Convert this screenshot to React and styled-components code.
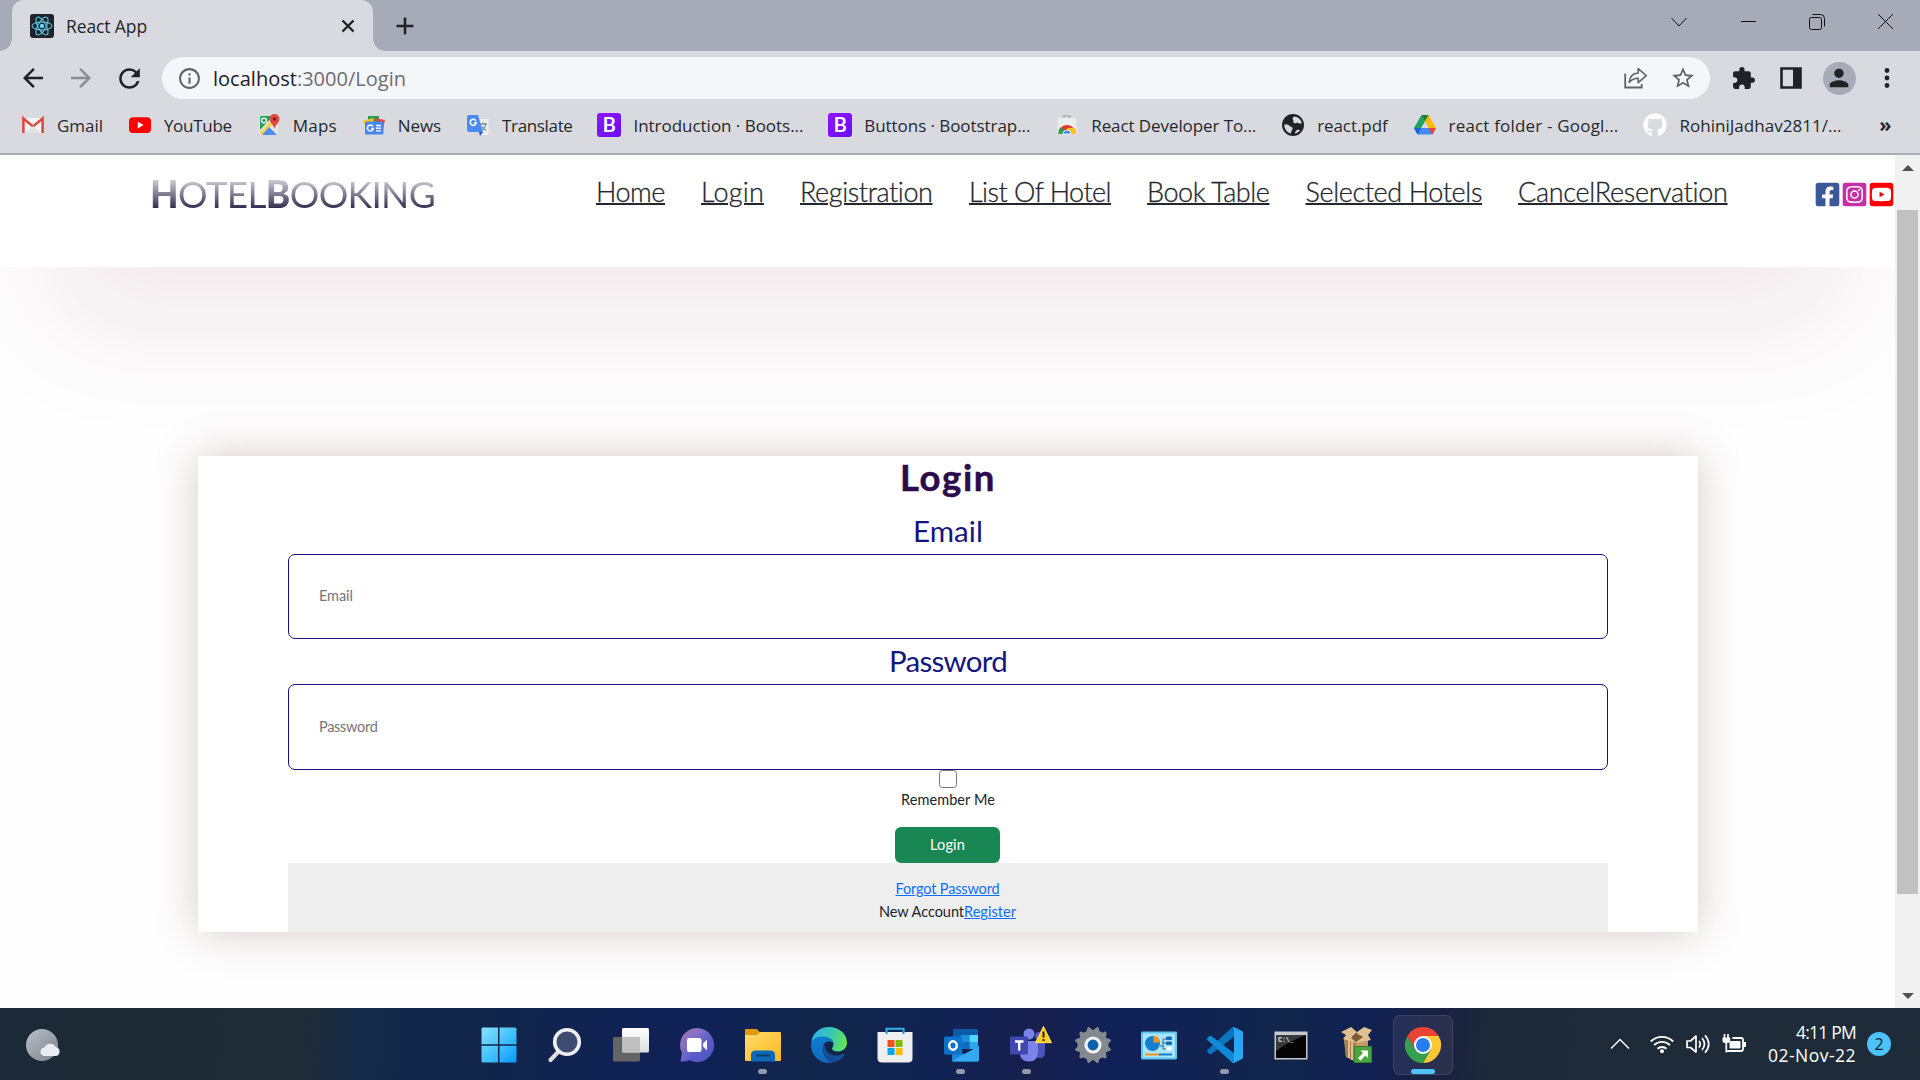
import React, { useLayoutEffect, useRef } from "react";
import styled, { createGlobalStyle, css } from "styled-components";
import { FaFacebookSquare, FaInstagramSquare, FaYoutubeSquare, FaGithub } from "react-icons/fa";
import {
  MdArrowBack,
  MdArrowForward,
  MdRefresh,
  MdInfoOutline,
  MdStarBorder,
  MdExtension,
  MdPerson,
} from "react-icons/md";

const ui = `"Open Sans", "Noto Sans", sans-serif`;
const site = `Lato, "Open Sans", sans-serif`;

const Global = createGlobalStyle`
  *, *::before, *::after { box-sizing: border-box; }
  body { margin: 0; overflow: hidden; background: #fff; font-family: ${ui}; }
`;

/* Tracks a line of text so that it fills a given width. */
const Line = styled.span`
  display: inline-block;
  white-space: nowrap;
  flex: none;
  text-decoration: inherit;
`;

function Fit({ w, children, ...rest }) {
  const ref = useRef(null);
  useLayoutEffect(() => {
    const el = ref.current;
    el.style.letterSpacing = "0px";
    const range = document.createRange();
    range.selectNodeContents(el);
    const natural = range.getBoundingClientRect().width;
    el.style.letterSpacing = `${(w - natural) / el.textContent.length}px`;
  }, [w, children]);
  return (
    <Line ref={ref} style={{ width: w }} {...rest}>
      {children}
    </Line>
  );
}

const Screen = styled.div`
  display: flex;
  flex-direction: column;
  width: 1920px;
  height: 1080px;
  overflow: hidden;
`;

/* ---------- browser chrome ---------- */

const TabStrip = styled.div`
  display: flex;
  flex: none;
  height: 51px;
  padding-left: 12px;
  background: #a7abb8;
`;

const Tab = styled.div`
  position: relative;
  display: flex;
  align-items: center;
  width: 361px;
  height: 51px;
  padding: 1px 18px 0 18px;
  border-radius: 12px 12px 0 0;
  background: #d9dae0;
  color: #25272b;
  font-size: 17.5px;
  &::before,
  &::after {
    content: "";
    position: absolute;
    bottom: 0;
    width: 12px;
    height: 12px;
  }
  &::before {
    left: -12px;
    background: radial-gradient(circle at 0 0, transparent 11.5px, #d9dae0 12px);
  }
  &::after {
    right: -12px;
    background: radial-gradient(circle at 100% 0, transparent 11.5px, #d9dae0 12px);
  }
`;

const TabTitle = styled.div`
  flex: 1;
  margin: 0 0 1px 12px;
`;

const NewTab = styled.div`
  display: flex;
  align-items: center;
  margin-left: 23px;
`;

const WindowControls = styled.div`
  display: flex;
  height: 43px;
  margin-left: auto;
`;

const WindowButton = styled.div`
  display: grid;
  place-items: center;
  width: 68.75px;
`;

const Toolbar = styled.div`
  display: flex;
  align-items: center;
  flex: none;
  height: 54px;
  padding: 0 9px 0 9px;
  background: #d9dae0;
`;

const ToolCell = styled.div`
  display: grid;
  place-items: center;
  width: 48px;
  height: 42px;
  color: ${(p) => p.$color || "#202226"};
`;

const Omnibox = styled.div`
  display: flex;
  align-items: center;
  flex: 1;
  height: 42px;
  margin: 0 9px 0 9px;
  padding: 0 3px 0 15px;
  border-radius: 21px;
  background: #f5f6f9;
  color: #5f6368;
`;

const Url = styled.div`
  flex: 1;
  margin-left: 11px;
  font-size: 20px;
  line-height: 43px;
  color: #6b6e73;
  b {
    font-weight: 400;
    color: #202124;
  }
`;

const Avatar = styled.div`
  display: grid;
  place-items: center;
  width: 33px;
  height: 33px;
  border-radius: 50%;
  background: #a7abb8;
`;

const Bookmarks = styled.div`
  display: flex;
  flex: none;
  gap: 24.9px;
  height: 50px;
  padding: 0 0 8px 21px;
  border-bottom: 2px solid #adaeb5;
  background: #d9dae0;
  color: #26282c;
  font-size: 17px;
`;

const Bookmark = styled.div`
  display: flex;
  align-items: center;
  gap: 12px;
  svg {
    flex: none;
  }
`;

const More = styled.div`
  display: flex;
  align-items: center;
  margin-left: 13px;
  font-size: 20px;
  font-weight: 700;
  line-height: 38px;
`;

/* ---------- web page ---------- */

const Viewport = styled.div`
  display: flex;
  flex: none;
  height: 853px;
  overflow: hidden;
  background: #fefefe;
`;

const Page = styled.main`
  width: 1895px;
  overflow: hidden;
  font-family: ${site};
`;

const Header = styled.header`
  display: flex;
  align-items: flex-start;
  height: 112px;
  padding: 0 0 0 150px;
  background: #fff;
`;

const Logo = styled.div`
  margin-top: 17px;
  font-size: 37px;
  font-weight: 400;
  line-height: 44px;
  color: transparent;
  background: linear-gradient(#c9c8d0 20%, #2b2348 86%);
  background-clip: text;
  -webkit-background-clip: text;
  b {
    font-weight: 900;
  }
`;

const Nav = styled.nav`
  display: flex;
  gap: 36px;
  margin: 17px 0 0 161px;
  font-size: 27px;
  line-height: 40px;
`;

const NavLink = styled.a`
  color: #24272d;
  font-weight: 300;
  text-decoration: underline;
  text-decoration-thickness: 2px;
  text-underline-offset: 1px;
  -webkit-text-stroke: 0.3px #24272d;
`;

const Socials = styled.div`
  display: flex;
  margin: 26px 0 0 auto;
`;

const SocialIcon = styled.span`
  display: flex;
  width: 27px;
  justify-content: center;
  color: ${(p) => p.$color};
`;

const Hero = styled.section`
  height: 741px;
  padding-top: 189px;
  overflow: hidden;
  background: #fefefe;
`;

const HeaderShade = styled.div`
  height: 400px;
  margin: -589px 50px 189px;
  box-shadow: 0 60px 112px #f2eaed;
`;

const Card = styled.form`
  display: flex;
  flex-direction: column;
  align-items: center;
  width: 1500px;
  height: 476px;
  margin: 0 0 0 198px;
  padding: 0 90px;
  position: relative;
  background: #fff;
  box-shadow: 0 0 40px rgba(100, 50, 45, 0.25);
  font-size: 14.5px;
  color: #212529;
`;

const Title = styled.h1`
  margin: 0 0 10px;
  font-size: 36.5px;
  font-weight: 700;
  line-height: 42px;
  color: #2b0b4c;
  -webkit-text-stroke: 0.5px #2b0b4c;
`;

const Label = styled.label`
  padding-bottom: ${(p) => p.$gap || 0}px;
  font-size: 29.5px;
  line-height: ${(p) => p.$h}px;
  color: #15157f;
`;

const Field = styled.input`
  flex: none;
  width: 1320px;
  height: ${(p) => p.$h}px;
  padding: 0 30px 2px;
  border: 1px solid #1d0c7d;
  border-radius: 7px;
  outline: 0;
  background: #fff;
  font: 14.5px ${site};
  letter-spacing: ${(p) => p.$track}px;
  &::placeholder {
    color: #757575;
    opacity: 1;
  }
`;

const Check = styled.input`
  appearance: none;
  flex: none;
  width: 18px;
  height: 18px;
  margin: 0;
  border: 1.5px solid #767676;
  border-radius: 3.5px;
  background: #fff;
`;

const Remember = styled.div`
  line-height: 23px;
`;

const Submit = styled.button`
  flex: none;
  width: 105px;
  height: 36px;
  margin: 16px 1px 0 0;
  padding: 0 0 1px;
  border: 0;
  border-radius: 6px;
  background: #198754;
  color: #fff;
  font: 14.5px ${site};
`;

const CardFooter = styled.div`
  display: flex;
  flex-direction: column;
  align-items: center;
  width: 1320px;
  height: 69px;
  padding: 14px 1px 0 0;
  background: #eee;
  line-height: 23px;
`;

const Link = styled.a`
  color: #0d6efd;
  text-decoration: underline;
`;

const Scrollbar = styled.div`
  display: flex;
  flex-direction: column;
  align-items: center;
  width: 25px;
  background: #f1f1f1;
`;

const Thumb = styled.div`
  width: 21px;
  height: 684px;
  margin: 39px 0 auto;
  background: #c1c1c1;
`;

const Arrow = styled.i`
  width: 0;
  height: 0;
  border: 6px solid transparent;
  ${(p) =>
    p.$down
      ? css`
          margin-bottom: 9px;
          border-width: 6px 6px 0;
          border-top-color: #505050;
        `
      : css`
          margin-top: 10px;
          border-width: 0 6px 6px;
          border-bottom-color: #505050;
        `}
`;

/* ---------- taskbar ---------- */

const Taskbar = styled.footer`
  display: grid;
  grid-template-columns: 1fr auto 1fr;
  flex: none;
  height: 72px;
  background: linear-gradient(
    95deg,
    #1c2a37 0,
    #1f2b36 16%,
    #132a4a 19%,
    #11254b 26%,
    #102157 36%,
    #12264a 42%,
    #112253 50%,
    #171f4c 54%,
    #102158 58%,
    #12254a 67%,
    #112153 71%,
    #1a2040 75%,
    #1d2b38 78%,
    #1e2b38 100%
  );
  color: #fff;
`;

const Weather = styled.div`
  padding: 21px 0 0 26px;
`;

const Apps = styled.div`
  display: flex;
  padding: 7px 0 0 1px;
`;

const AppButton = styled.div`
  display: flex;
  flex-direction: column;
  align-items: center;
  width: 60px;
  height: 60px;
  margin: 0 3px;
  padding-top: 11px;
  border: 1px solid ${(p) => (p.$active ? "#ffffff18" : "transparent")};
  border-radius: 7px;
  background: ${(p) => (p.$active ? "#ffffff12" : "transparent")};
  svg {
    flex: none;
    overflow: visible;
  }
`;

const Indicator = styled.i`
  width: ${(p) => (p.$active ? 24 : 9)}px;
  height: 5px;
  margin-top: 6px;
  border-radius: 3px;
  background: ${(p) => (p.$active ? "#4cc2ff" : "#949aab")};
`;

const Tray = styled.div`
  display: flex;
  align-items: center;
  justify-content: flex-end;
  padding-right: 29px;
  svg {
    flex: none;
  }
`;

const TrayIcons = styled.div`
  display: flex;
  align-items: center;
  gap: 12px;
  svg:first-child {
    margin-right: 8px;
  }
`;

const Clock = styled.div`
  display: flex;
  flex-direction: column;
  align-items: flex-end;
  margin: 0 11px 0 21px;
  font-size: 17.5px;
  line-height: 23px;
`;

const Badge = styled.div`
  display: grid;
  place-items: center;
  width: 24px;
  height: 24px;
  border-radius: 50%;
  background: #4cc2ff;
  color: #10202c;
  font-size: 16px;
  line-height: 22px;
`;

/* ---------- drawings ---------- */

const ReactIcon = () => (
  <svg width="24" height="24" viewBox="0 0 24 24">
    <rect width="24" height="24" rx="3" fill="#20232a" />
    <g fill="none" stroke="#61dafb" strokeWidth="1">
      <ellipse cx="12" cy="12" rx="10" ry="4" />
      <ellipse cx="12" cy="12" rx="10" ry="4" transform="rotate(60 12 12)" />
      <ellipse cx="12" cy="12" rx="10" ry="4" transform="rotate(120 12 12)" />
    </g>
    <circle cx="12" cy="12" r="2.2" fill="#61dafb" />
  </svg>
);

const Gmail = () => (
  <svg width="24" height="24" viewBox="0 0 24 24">
    <path d="M2 5h20v15H2z" fill="#f4f4f4" />
    <path d="M2.4 20V5.6L12 13.4l9.6-7.8V20" fill="none" stroke="#dd4b3e" strokeWidth="2.6" />
    <path d="M4 20 12 13l8 7z" fill="#e3e3e3" />
  </svg>
);

const YouTube = () => (
  <svg width="24" height="24" viewBox="0 0 24 24">
    <rect x="1" y="4.3" width="22" height="15.6" rx="4" fill="#f00" />
    <path d="m9.8 8.8 5.8 3.3-5.8 3.3z" fill="#fff" />
  </svg>
);

const Maps = () => (
  <svg width="24" height="24" viewBox="0 0 24 24">
    <rect x="2" y="3" width="19" height="19" rx="2" fill="#e6e6e6" />
    <path d="M4 3h12L3 17V5q0-2 1-2z" fill="#2a9d57" />
    <path d="M2.5 20 17 5l2 3L5 22z" fill="#fbd04a" />
    <path d="m5 22 7-8 8 8z" fill="#4d8bf5" />
    <circle cx="7" cy="7.5" r="2.4" fill="none" stroke="#fff" strokeWidth="1.3" />
    <path d="M17.5 1a5 5 0 0 1 5 5c0 4-4 5-5 10-1-5-5-6-5-10a5 5 0 0 1 5-5z" fill="#df4a3c" />
    <circle cx="17.5" cy="6" r="1.8" fill="#7c1f17" />
  </svg>
);

const News = () => (
  <svg width="24" height="24" viewBox="0 0 24 24">
    <path d="M6 3h11v6H6z" fill="#2a9d57" />
    <path d="m1 8 10-3 2 8H3z" fill="#fbc11b" />
    <path d="m12 5 11 2-2 9z" fill="#e4473b" />
    <rect x="3" y="8.5" width="18.5" height="13" rx="1.2" fill="#4687f3" />
    <path d="M11 13.4a3 3 0 1 0 .4 2H9" fill="none" stroke="#fff" strokeWidth="1.5" />
    <path d="M14 12.5h5M14 15.2h5M14 17.9h5" stroke="#fff" strokeWidth="1.4" />
  </svg>
);

const Translate = () => (
  <svg width="24" height="24" viewBox="0 0 24 24">
    <path d="M10 6h12.500v16H15z" fill="#eceff1" />
    <path d="M14 11h7M17.500 9.500V11M20 11c-.5 3-3 5.500-5 6.500m1-4c1 2 2.500 3 4.500 4" fill="none" stroke="#78909c" strokeWidth="1.300" />
    <path d="M3 2h9l5 17H3q-2 0-2-2V4q0-2 2-2z" fill="#4a8af4" />
    <path d="m13 19 4 0-3 4z" fill="#2a56c6" />
    <path d="M9.800 7.800a3 3 0 1 0 .4 2H8" fill="none" stroke="#fff" strokeWidth="1.500" />
  </svg>
);

const BootstrapBox = styled.span`
  display: grid;
  place-items: center;
  flex: none;
  width: 24px;
  height: 24px;
  border-radius: 3px;
  background: linear-gradient(135deg, #9013fe, #6610f2);
  color: #fff;
  font: 500 21px/24px Roboto, sans-serif;
`;

const WebStore = () => (
  <svg width="24" height="24" viewBox="0 0 24 24">
    <path d="M9 5V3h6v2" fill="none" stroke="#b5b7bb" strokeWidth="2" />
    <path d="M3 5h18l.8 16H2.200z" fill="#eceded" />
    <path d="M3.500 20.500a8.500 8.500 0 0 1 17 0z" fill="#e33b2e" />
    <path d="M3.500 21q-.5-5 2.500-7l5 7z" fill="#2ba24c" />
    <path d="M12 15h8q1.500 3 1 6h-9z" fill="#fcc31e" />
    <path d="M8 21a4 4 0 1 1 8 0z" fill="#4587f3" stroke="#fff" strokeWidth=".8" />
  </svg>
);

const Globe = () => (
  <svg width="24" height="24" viewBox="0 0 24 24">
    <circle cx="12" cy="12" r="11" fill="#202226" />
    <path
      d="M13 3.500c4 .2 7 3 7.800 6.500-1.800 1-3.300.6-4.300-.5-1 0-1.500 1-2.800.8-1.200-.3-1.700-1.500-1.200-2.800-1-.8-1.500-2.300.5-4zM3.300 11.500c2.700-.3 5.200.3 5.700 2 1.500.3 2.800.8 2.600 2.300-.2 1.400-1.600 1.700-1.800 4.700C6 19.500 3.200 16 3.300 11.500zM14 20.500c-.4-2 1.400-2 1.600-3.500 1.400-.4 2.600-.2 3.600.3-1.200 1.600-3 2.800-5.200 3.200z"
      fill="#d9dae0"
    />
  </svg>
);

const Drive = () => (
  <svg width="24" height="24" viewBox="0 0 24 24">
    <path d="M8.500 2h7l-3.500 6.200-7.500 13L1 15z" fill="#1da462" />
    <path d="M8.500 2h7L23 15h-7.200z" fill="#ffba00" />
    <path d="M8.500 2h7L12 8.200z" fill="#188038" />
    <path d="M1 15h22l-3.600 6.500H4.600z" fill="#4688f4" />
    <path d="M1 15h7.200l-3.600 6.500z" fill="#1967d2" />
    <path d="M15.800 15H23l-3.600 6.500z" fill="#ea4335" />
  </svg>
);

const Share = () => (
  <svg width="24" height="24" viewBox="-.7 0 24 24" fill="none" stroke="#5f6368" strokeWidth="1.800">
    <path d="M1.500 7.500v14h16.500v-3.500" />
    <path d="M5.500 16.500C6 9.800 9.500 7.300 14.500 7V2.500l8 7.200-8 7V12.200c-4 0-6.500 1-9 4.300z" strokeLinejoin="round" strokeWidth="1.600" />
  </svg>
);

const Panel = () => (
  <svg width="22" height="22" viewBox="0 0 22 22">
    <path d="M1.500 1.500h19v19h-19z" fill="none" stroke="#202226" strokeWidth="2.600" />
    <path d="M13 1h8v20h-8z" fill="#202226" />
  </svg>
);

const Dots = () => (
  <svg width="6" height="24" viewBox="0 0 6 24" fill="#202226">
    <circle cx="3" cy="4.500" r="2.400" />
    <circle cx="3" cy="12" r="2.400" />
    <circle cx="3" cy="19.500" r="2.400" />
  </svg>
);

const Ico = ({ children, box = "0 0 36 36" }) => (
  <svg width="36" height="36" viewBox={box}>
    {children}
  </svg>
);

const WindowsIcon = () => (
  <Ico>
    <defs>
      <linearGradient id="win" x1="0" y1="0" x2="36" y2="36" gradientUnits="userSpaceOnUse">
        <stop stopColor="#8ae2fb" />
        <stop offset=".55" stopColor="#3fbffc" />
        <stop offset="1" stopColor="#0a95fa" />
      </linearGradient>
    </defs>
    <path
      fill="url(#win)"
      d="M2 .5h15v16.700H.5V2Q.5.500 2 .5zM18.500.5H34q1.500 0 1.500 1.500v15.200h-17zM.5 18.700H17v16.800H2q-1.500 0-1.500-1.500zM18.500 18.700h17V34q0 1.500-1.500 1.500H18.500z"
    />
  </Ico>
);

const SearchIcon = () => (
  <Ico>
    <path d="m12 24-8.500 9" stroke="#dcdcde" strokeWidth="4.200" strokeLinecap="round" />
    <circle cx="20" cy="15" r="12.300" fill="#3f4c72" stroke="#efeff1" strokeWidth="3.600" />
  </Ico>
);

const TaskViewIcon = () => (
  <Ico>
    <defs>
      <linearGradient id="tv" x1="0" y1="0" x2="0" y2="1">
        <stop stopColor="#fff" />
        <stop offset="1" stopColor="#dedede" />
      </linearGradient>
    </defs>
    <rect x="0" y="10" width="27" height="24.500" rx="1.500" fill="#646464" />
    <rect x="9" y="1" width="27" height="24.500" rx="1.500" fill="url(#tv)" />
    <path d="M9 10h18v15.500H10.500Q9 25.500 9 24z" fill="#bfbfbf" />
  </Ico>
);

const ChatIcon = () => (
  <Ico>
    <defs>
      <linearGradient id="chat" x1="0" y1="0" x2="1" y2="1">
        <stop stopColor="#b06fae" />
        <stop offset=".35" stopColor="#7f70c8" />
        <stop offset=".6" stopColor="#5a5ccb" />
        <stop offset="1" stopColor="#4f55c4" />
      </linearGradient>
    </defs>
    <path fill="url(#chat)" d="M18 1a17 17 0 1 1-7.500 32.200Q6 35 1.500 34.500L3 26A17 17 0 0 1 18 1z" />
    <rect x="8" y="11" width="14.500" height="14" rx="2.200" fill="#fff" />
    <path d="m24 16.500 3.500-3.500q.5-.5.5 0v10q0 .5-.5 0L24 19.500z" fill="#fff" />
  </Ico>
);

const ExplorerIcon = () => (
  <Ico>
    <defs>
      <linearGradient id="fold" x1="0" y1="0" x2="1" y2="1">
        <stop stopColor="#ffdc6e" />
        <stop offset="1" stopColor="#fcb81d" />
      </linearGradient>
    </defs>
    <path d="M0 3q0-1 1-1h11l3 3.500L12 9H0z" fill="#e09a0c" />
    <path d="M0 8h12l3-3h20q1 0 1 1v27q0 1-1 1H1q-1 0-1-1z" fill="url(#fold)" />
    <path d="M6 34.500V28q0-4.500 4.500-4.500h15Q30 23.500 30 28v6.500z" fill="#0d68b8" />
    <path d="M12 28.500h12" stroke="#0a3e73" strokeWidth="2" strokeLinecap="round" />
  </Ico>
);

const EdgeIcon = () => (
  <Ico>
    <defs>
      <linearGradient id="e1" x1="0" y1=".3" x2="1" y2=".5">
        <stop stopColor="#2fb2e9" />
        <stop offset=".5" stopColor="#37c5b8" />
        <stop offset="1" stopColor="#63e55a" />
      </linearGradient>
      <linearGradient id="e2" x1="0" y1="0" x2="0" y2="1">
        <stop stopColor="#0c7fd0" />
        <stop offset="1" stopColor="#1267c2" />
      </linearGradient>
    </defs>
    <path d="M.3 15C1.500 6 9 0 18 0c10 0 18 7 18 15.500 0 5.500-4 9-9 9-4 0-6-1.500-6-3 0-1 1.500-1.500 1.500-4.500 0-4-4-6.500-9-6.500C7 10.500 2 12 .3 15z" fill="url(#e1)" />
    <path d="M0 18C0 12.500 5 9.500 11 9.500c6.500 0 11 3 11.500 7-2-3-8-3.500-10 1.500-3 8 4 18 10 17.300Q20 36 18 36C8 36 0 28 0 18z" fill="url(#e2)" />
    <path d="M12 19.500C10.500 27 15 35 23 35.300c5-1 8.500-4 10.800-7.800.3-.7-.3-1-.9-.7C24 31 15 27.500 14 19q-1.500-1-2 .5z" fill="#124f97" />
  </Ico>
);

const StoreIcon = () => (
  <Ico>
    <path d="M9.500 7V1.800h17V7" fill="none" stroke="#2fb4ee" strokeWidth="2" />
    <path d="M.5 5h35v26q0 4.500-4.500 4.500H5Q.5 35.500.5 31z" fill="#efeff0" />
    <path d="M9.500 3v4M26.500 3v4" stroke="#1796dc" strokeWidth="2" />
    <path d="M10.500 13h7v7h-7z" fill="#f25022" />
    <path d="M18.500 13h7v7h-7z" fill="#7fba00" />
    <path d="M10.500 21h7v7h-7z" fill="#00a4ef" />
    <path d="M18.500 21h7v7h-7z" fill="#ffb900" />
  </Ico>
);

const OutlookIcon = () => (
  <Ico>
    <path d="M11 2h23q1 0 1 1v17H10V3q0-1 1-1z" fill="#0a5aa8" />
    <path d="M18 8h8.500v7H18z" fill="#1c8fe0" />
    <path d="M26.500 8H35v7h-8.500z" fill="#4fd8ff" />
    <path d="M18 15h8.500v7H18z" fill="#0d6cc2" />
    <path d="M26.500 15H35v7h-8.500z" fill="#28a8ea" />
    <path d="M9 21 22 27.500 36 19v14q0 1.500-1.500 1.500h-24Q9 34.500 9 33z" fill="#1b87d8" />
    <path d="M9 34 36 19v14q0 1.500-1.500 1.500H10z" fill="#35a9ef" />
    <rect x="1" y="9.500" width="18" height="18" rx="1.500" fill="#0c72cc" />
    <ellipse cx="10" cy="18.500" rx="3.800" ry="4.200" fill="none" stroke="#fff" strokeWidth="2.400" />
  </Ico>
);

const TeamsIcon = () => (
  <Ico>
    <circle cx="30" cy="9" r="4" fill="#5059c9" />
    <path d="M25 14h11v11q0 6-5.500 6T25 27z" fill="#4b53bc" />
    <circle cx="20" cy="7" r="5.500" fill="#7b83eb" />
    <path d="M11 14h18v11q0 9.500-9 9.500T11 26z" fill="#7b83eb" />
    <rect x="1" y="9.500" width="18" height="18" rx="1.500" fill="#4048ae" />
    <path d="M6 14.500h8.500M10.200 14.500v9" stroke="#fff" strokeWidth="2.400" />
    <path d="M34.500-.5 42.500 15.700h-16z" fill="#ffcf24" stroke="#ffdf60" strokeLinejoin="round" />
    <path d="M34.500 4.500v6M34.500 12v2" stroke="#222" strokeWidth="2" />
  </Ico>
);

const SettingsIcon = () => (
  <Ico>
    <g fill="#84898f">
      <circle cx="18" cy="18" r="14.500" />
      {[30, 90, 150, 210, 270, 330].map((a) => (
        <path
          key={a}
          d="M9 9 12.200 1q.4-1.100 1.500-.9Q15 .4 15.500 2q2.500 1.500 5 0 .5-1.600 1.800-1.900 1.100-.2 1.500.9L27 9z"
          transform={`rotate(${a} 18 18)`}
        />
      ))}
    </g>
    <circle cx="18" cy="18" r="7" fill="#0c5fae" stroke="#eef0f2" strokeWidth="3.200" />
  </Ico>
);

const ControlPanelIcon = () => (
  <Ico>
    <rect x="0" y="4.500" width="36" height="28" rx="1.500" fill="#5cc8f2" />
    <rect x="2" y="6.500" width="32" height="24" fill="#a9e4fa" />
    <circle cx="11.500" cy="16.500" r="7.500" fill="#1080cc" />
    <path d="M12.500 15.500V8.500a7 7 0 0 1 6.500 7z" fill="#f7931e" />
    <path d="M19 19h3v-7h3M22 16h3M22 19v3h3" fill="none" stroke="#2a6d9e" strokeWidth="1" />
    <rect x="25" y="9.500" width="6" height="3.500" rx="1" fill="#0f6db5" />
    <rect x="25" y="14.500" width="6" height="3.500" rx="1" fill="#0f6db5" />
    <rect x="25" y="20" width="6" height="3.500" rx="1" fill="#fff" />
    <path d="M4 27.500h14" stroke="#f7931e" strokeWidth="2" />
    <path d="M18 27.500h13" stroke="#1080cc" strokeWidth="2" />
  </Ico>
);

const CodeIcon = () => (
  <Ico box="0 0 100 100">
    <path d="M96.500 10.800 75.900.9a6.200 6.200 0 0 0-7.100 1.200L1.300 63.600a4.200 4.200 0 0 0 0 6.200l5.500 5a4.200 4.200 0 0 0 5.300.2l81.200-61.600c2.700-2.100 6.700-.1 6.700 3.300v-.3a6.200 6.200 0 0 0-3.500-5.600z" fill="#0a75bd" />
    <path d="M96.500 89.200l-20.600 9.900a6.200 6.200 0 0 1-7.100-1.200L1.300 36.400a4.200 4.200 0 0 1 0-6.200l5.500-5a4.200 4.200 0 0 1 5.300-.2l81.200 61.600c2.700 2.100 6.700.1 6.700-3.300v.3a6.200 6.200 0 0 1-3.500 5.600z" fill="#1089d5" />
    <path d="M75.900 99.100a6.200 6.200 0 0 1-7.100-1.200c2.300 2.300 6.200.7 6.200-2.600V4.700c0-3.300-3.900-4.900-6.200-2.600a6.200 6.200 0 0 1 7.100-1.200l20.600 9.900a6.200 6.200 0 0 1 3.500 5.600v67.200a6.200 6.200 0 0 1-3.500 5.600z" fill="#2aa5f2" />
  </Ico>
);

const PromptText = styled.text`
  font: 700 6.5px "Liberation Mono", monospace;
  fill: #e8e8e8;
`;

const TerminalIcon = () => (
  <Ico>
    <rect x="1.500" y="4.500" width="33" height="28" fill="#c5c9ce" />
    <path d="M3 8h30v23H3z" fill="#050505" />
    <path d="M3 8h30Q16 14 3 24z" fill="#3a3a3a" />
    <PromptText x="5" y="14.500">C:\_</PromptText>
  </Ico>
);

const PackageIcon = () => (
  <Ico>
    <path d="M5 12h24v17l-11 6-11-5z" fill="#c49a66" />
    <path d="m5 12 12 4v19L7 30z" fill="#a87e4e" />
    <path d="M2 5 12 0l6 5-5 5 4 6-13-4 3-4zM18 5l7-5 8 3-4 5 3 5-14 3-2-5z" fill="#dfc08f" />
    <path d="m12 11 5-5 7 4-7 5z" fill="#7d5a34" />
    <path d="M10 14v17M13 15v18" stroke="#e6d3b0" strokeWidth="1.500" />
    <rect x="15.500" y="19.500" width="17" height="16" fill="#4ca53c" stroke="#367f2b" />
    <path d="m19 31 5-5-2.500-2.500H29V31l-2.500-2.500-5 5z" fill="#fff" />
  </Ico>
);

const ChromeIcon = () => (
  <Ico>
    <path d="M2.400 9A18 18 0 0 1 33.600 9H18l-7.800 13.500z" fill="#ea4335" />
    <path d="M18 9h15.600A18 18 0 0 1 18 36l7.800-13.500z" fill="#fcc934" />
    <path d="M18 36A18 18 0 0 1 2.400 9l7.800 13.500h15.600z" fill="#34a050" />
    <circle cx="18" cy="18" r="9" fill="#fff" />
    <circle cx="18" cy="18" r="7" fill="#2a7df0" />
  </Ico>
);

const WeatherIcon = () => (
  <svg width="36" height="34" viewBox="0 0 36 34">
    <defs>
      <linearGradient id="moon" x1="0" y1="0" x2="1" y2="1">
        <stop stopColor="#b9c0ca" />
        <stop offset="1" stopColor="#7c828a" />
      </linearGradient>
    </defs>
    <circle cx="16" cy="16" r="16" fill="url(#moon)" />
    <path d="M18 27a4.300 4.300 0 0 1 .3-8.500 6.500 6.500 0 0 1 11.500-.5A4.600 4.600 0 0 1 30 27z" fill="#e9edf1" />
  </svg>
);

const bookmarks = [
  [<Gmail />, "Gmail", 46],
  [<YouTube />, "YouTube", 68],
  [<Maps />, "Maps", 44],
  [<News />, "News", 43.5],
  [<Translate />, "Translate", 70.5],
  [<BootstrapBox>B</BootstrapBox>, "Introduction · Boots...", 170],
  [<BootstrapBox>B</BootstrapBox>, "Buttons · Bootstrap...", 166],
  [<WebStore />, "React Developer To...", 165],
  [<Globe />, "react.pdf", 70.5],
  [<Drive />, "react folder - Googl...", 170],
  [<FaGithub size={24} color="#fff" />, "RohiniJadhav2811/...", 162],
];

const links = [
  ["Home", 69],
  ["Login", 63],
  ["Registration", 133],
  ["List Of Hotel", 142],
  ["Book Table", 122.5],
  ["Selected Hotels", 176.5],
  ["CancelReservation", 210],
];

const apps = [
  [WindowsIcon],
  [SearchIcon],
  [TaskViewIcon],
  [ChatIcon],
  [ExplorerIcon, "open"],
  [EdgeIcon],
  [StoreIcon],
  [OutlookIcon, "open"],
  [TeamsIcon, "open"],
  [SettingsIcon],
  [ControlPanelIcon],
  [CodeIcon, "open"],
  [TerminalIcon],
  [PackageIcon],
  [ChromeIcon, "active"],
];

export default function App() {
  return (
    <Screen>
      <Global />
      <TabStrip>
        <Tab>
          <ReactIcon />
          <TabTitle>
            <Fit w={81}>React App</Fit>
          </TabTitle>
          <svg width="14" height="14" viewBox="0 0 14 14">
            <path d="m1.500 1.500 11 11m0-11-11 11" stroke="#202226" strokeWidth="2.400" />
          </svg>
        </Tab>
        <NewTab>
          <svg width="18" height="18" viewBox="0 0 18 18">
            <path d="M9 .5v17M.5 9h17" stroke="#202226" strokeWidth="2.500" />
          </svg>
        </NewTab>
        <WindowControls>
          <WindowButton>
            <svg width="16" height="10" viewBox="0 0 16 10" fill="none" stroke="#111">
              <path d="m.5 1 7.500 8 7.500-8" />
            </svg>
          </WindowButton>
          <WindowButton>
            <svg width="15" height="1" viewBox="0 0 15 1">
              <path d="M0 0h15v1H0z" fill="#111" />
            </svg>
          </WindowButton>
          <WindowButton>
            <svg width="16" height="16" viewBox="0 0 16 16" fill="none" stroke="#111">
              <rect x=".5" y="3.500" width="12" height="12" rx="2" />
              <path d="M3.500.5h8q4 0 4 4v8" />
            </svg>
          </WindowButton>
          <WindowButton>
            <svg width="15" height="15" viewBox="0 0 15 15" stroke="#111">
              <path d="m0 0 15 15m0-15L0 15" />
            </svg>
          </WindowButton>
        </WindowControls>
      </TabStrip>
      <Toolbar>
        <ToolCell>
          <MdArrowBack size={30} />
        </ToolCell>
        <ToolCell $color="#8b8d93">
          <MdArrowForward size={30} />
        </ToolCell>
        <ToolCell>
          <MdRefresh size={31} />
        </ToolCell>
        <Omnibox>
          <MdInfoOutline size={25} />
          <Url>
            <Fit w={193}>
              <b>localhost</b>:3000/Login
            </Fit>
          </Url>
          <ToolCell>
            <Share />
          </ToolCell>
          <ToolCell $color="#5f6368">
            <MdStarBorder size={26} />
          </ToolCell>
        </Omnibox>
        <ToolCell>
          <MdExtension size={25} />
        </ToolCell>
        <ToolCell>
          <Panel />
        </ToolCell>
        <ToolCell>
          <Avatar>
            <MdPerson size={28} />
          </Avatar>
        </ToolCell>
        <ToolCell>
          <Dots />
        </ToolCell>
      </Toolbar>
      <Bookmarks>
        {bookmarks.map(([icon, name, w]) => (
          <Bookmark key={name}>
            {icon}
            <Fit w={w}>{name}</Fit>
          </Bookmark>
        ))}
        <More>»</More>
      </Bookmarks>

      <Viewport>
        <Page>
          <Header>
            <Logo>
              <Fit w={285}>
                <b>H</b>OTEL<b>B</b>OOKING
              </Fit>
            </Logo>
            <Nav>
              {links.map(([name, w]) => (
                <NavLink key={name}>
                  <Fit w={w}>{name}</Fit>
                </NavLink>
              ))}
            </Nav>
            <Socials>
              <SocialIcon $color="#3b5998">
                <FaFacebookSquare size={27} />
              </SocialIcon>
              <SocialIcon $color="#c62fa5">
                <FaInstagramSquare size={27} />
              </SocialIcon>
              <SocialIcon $color="#fe0000">
                <FaYoutubeSquare size={27} />
              </SocialIcon>
            </Socials>
          </Header>
          <Hero>
            <HeaderShade />
            <Card>
              <Title>
                <Fit w={96}>Login</Fit>
              </Title>
              <Label $h={46}>
                <Fit w={70}>Email</Fit>
              </Label>
              <Field $h={85} $track={-0.1} placeholder="Email" />
              <Label $h={44} $gap={1}>
                <Fit w={118}>Password</Fit>
              </Label>
              <Field $h={86} $track={-0.3} placeholder="Password" />
              <Check type="checkbox" />
              <Remember>
                <Fit w={94}>Remember Me</Fit>
              </Remember>
              <Submit type="button">
                <Fit w={35}>Login</Fit>
              </Submit>
              <CardFooter>
                <Link>
                  <Fit w={104}>Forgot Password</Fit>
                </Link>
                <div>
                  <Fit w={85}>New Account</Fit>
                  <Link>
                    <Fit w={52}>Register</Fit>
                  </Link>
                </div>
              </CardFooter>
            </Card>
          </Hero>
        </Page>
        <Scrollbar>
          <Arrow />
          <Thumb />
          <Arrow $down />
        </Scrollbar>
      </Viewport>

      <Taskbar>
        <Weather>
          <WeatherIcon />
        </Weather>
        <Apps>
          {apps.map(([Icon, state], i) => (
            <AppButton key={i} $active={state === "active"}>
              <Icon />
              {state && <Indicator $active={state === "active"} />}
            </AppButton>
          ))}
        </Apps>
        <Tray>
          <TrayIcons>
            <svg width="20" height="12" viewBox="0 0 20 12" fill="none" stroke="#fff" strokeWidth="1.400">
              <path d="m1 10.500 9-9 9 9" />
            </svg>
            <svg width="24" height="22" viewBox="8 0 24 22" fill="none" stroke="#fff" strokeWidth="1.900">
              <path d="M8.800 8.500a15.800 15.800 0 0 1 22.400 0M12 12.200a11.300 11.300 0 0 1 16 0M15.500 15.800a6.400 6.400 0 0 1 9 0" />
              <circle cx="20" cy="18.200" r="2" fill="#fff" stroke="none" />
            </svg>
            <svg width="24" height="22" viewBox="0 0 24 22" fill="none" stroke="#fff" strokeWidth="1.700">
              <path d="M1 8v6.500h3.500L10 19V3L4.500 8zM13 8q2.500 3 0 6.500M16 5q5 6 0 12M19 2.200q7.500 8.800 0 17.600" strokeLinejoin="round" />
            </svg>
            <svg width="25" height="22" viewBox="0 0 25 22" fill="none" stroke="#fff">
              <path d="M2.500 1v4M6 1v4" strokeWidth="1.700" />
              <path d="M.5 4.500h7.700v3.200q0 2.300-3.900 2.300T.5 7.700z" fill="#fff" stroke="none" />
              <path d="M4.300 10v9.500" strokeWidth="1.700" />
              <path d="M10.500 5H19q2 0 2 2v9q0 2-2 2H4.500" strokeWidth="1.800" />
              <rect x="7.500" y="8" width="11" height="7.500" rx="1" fill="#fff" stroke="none" />
              <path d="M22.800 9v5" strokeWidth="2.400" />
            </svg>
          </TrayIcons>
          <Clock>
            <Fit w={60}>4:11 PM</Fit>
            <Fit w={88}>02-Nov-22</Fit>
          </Clock>
          <Badge>2</Badge>
        </Tray>
      </Taskbar>
    </Screen>
  );
}
